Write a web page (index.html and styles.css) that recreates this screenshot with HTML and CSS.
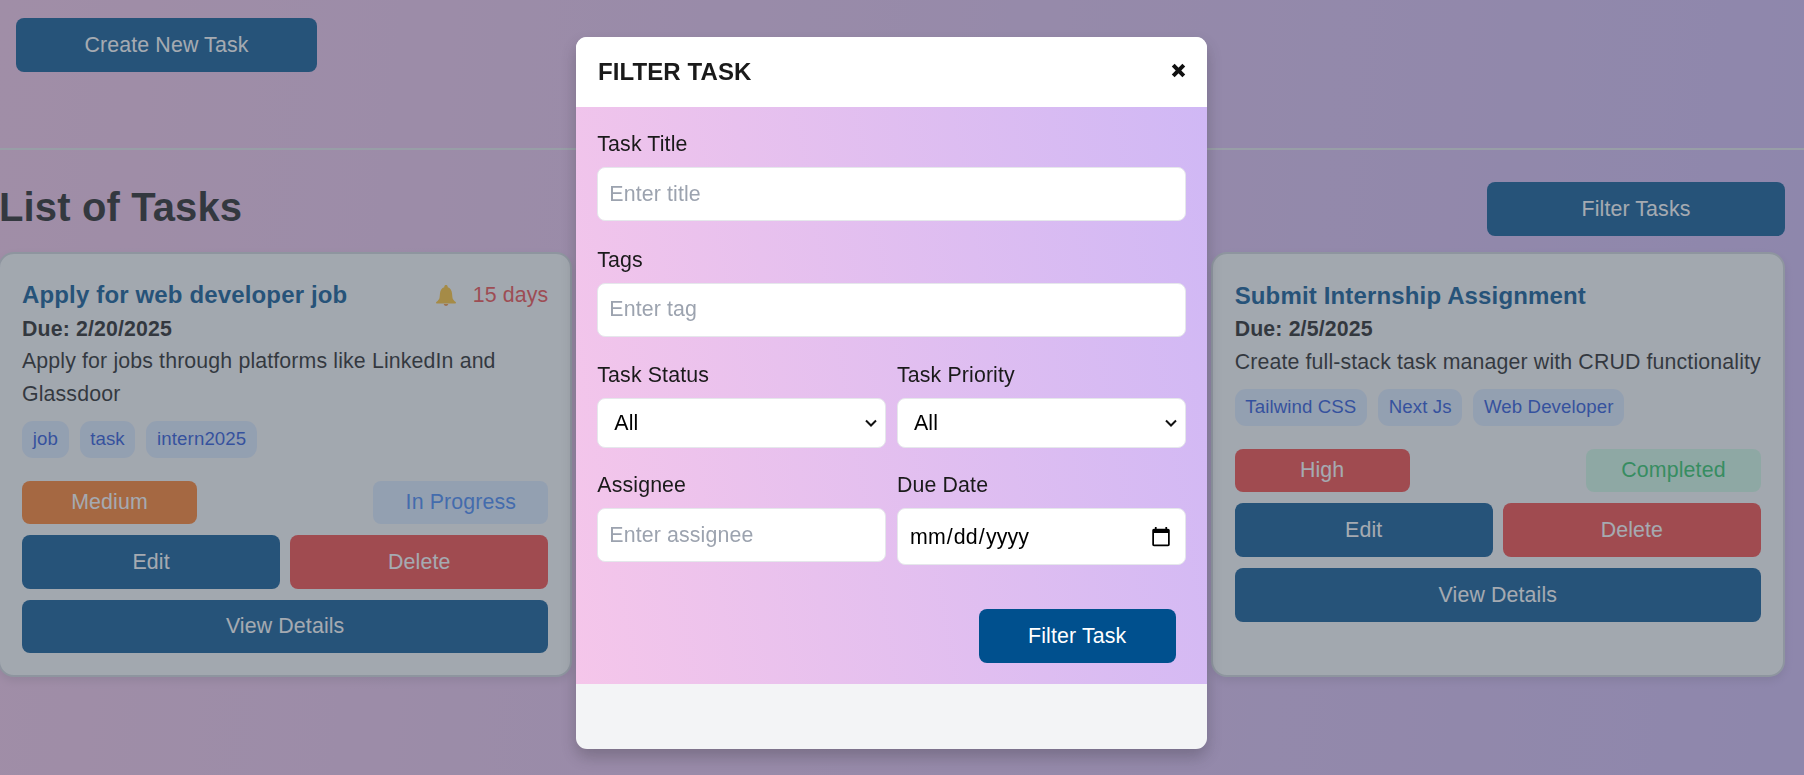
FILE: index.html
```html
<!DOCTYPE html>
<html lang="en">
<head>
    <meta charset="UTF-8">
    <meta name="viewport" content="width=device-width, initial-scale=1.0">
    <title>Task Manager</title>
    <link rel="stylesheet" href="styles.css">
</head>
<body>
    <div class="top-bar">
        <button type="button" class="btn btn-create">Create New Task</button>
    </div>
    <hr class="divider">

    <main class="tasks">
        <div class="tasks-head">
            <h2>List of Tasks</h2>
            <button type="button" class="btn btn-filter">Filter Tasks</button>
        </div>

        <div class="task-grid">
            <article class="card">
                <div class="card-title-row">
                    <h3>Apply for web developer job</h3>
                    <span class="reminder">
                        <svg class="bell" viewBox="0 0 20 21" aria-hidden="true">
                            <path fill="#ffc02a" d="M10 0c1 0 1.700.7 1.700 1.700v.6c2.700.8 4 3 4.300 6l.4 4c.2 2 1.400 3.300 3.300 4.700.5.4.3 1.500-.5 1.500H.8c-.8 0-1-1.100-.5-1.500 1.900-1.400 3.100-2.700 3.300-4.700l.4-4c.3-3 1.600-5.200 4.300-6v-.6C8.300.7 9 0 10 0z"/>
                            <path fill="#f0903a" d="M7.700 19h4.600c-.3 1.200-1.200 2-2.300 2s-2-.8-2.300-2z"/>
                        </svg>
                        <span class="days-left">15 days</span>
                    </span>
                </div>
                <p class="due">Due: 2/20/2025</p>
                <p class="desc">Apply for jobs through platforms like LinkedIn and Glassdoor</p>
                <div class="tags">
                    <span class="tag">job</span>
                    <span class="tag">task</span>
                    <span class="tag">intern2025</span>
                </div>
                <div class="badges">
                    <span class="badge badge-medium">Medium</span>
                    <span class="badge badge-progress">In Progress</span>
                </div>
                <div class="card-actions">
                    <button type="button" class="btn">Edit</button>
                    <button type="button" class="btn btn-delete">Delete</button>
                </div>
                <button type="button" class="btn btn-wide">View Details</button>
            </article>

            <!-- middle card sits behind the modal -->
            <article class="card"></article>

            <article class="card">
                <div class="card-title-row">
                    <h3>Submit Internship Assignment</h3>
                </div>
                <p class="due">Due: 2/5/2025</p>
                <p class="desc">Create full-stack task manager with CRUD functionality</p>
                <div class="tags">
                    <span class="tag">Tailwind CSS</span>
                    <span class="tag">Next Js</span>
                    <span class="tag">Web Developer</span>
                </div>
                <div class="badges">
                    <span class="badge badge-high">High</span>
                    <span class="badge badge-done">Completed</span>
                </div>
                <div class="card-actions">
                    <button type="button" class="btn">Edit</button>
                    <button type="button" class="btn btn-delete">Delete</button>
                </div>
                <button type="button" class="btn btn-wide">View Details</button>
            </article>
        </div>
    </main>

    <div class="overlay">
        <div class="modal">
            <div class="modal-head">
                <h2>FILTER TASK</h2>
                <button type="button" class="close" aria-label="Close">
                    <svg viewBox="0 0 15 15" aria-hidden="true">
                        <path d="M2.200 2.200l10.600 10.600M12.800 2.200L2.200 12.800" stroke="#111" stroke-width="4" fill="none"/>
                    </svg>
                </button>
            </div>
            <form class="modal-body">
                <div class="field">
                    <label for="title">Task Title</label>
                    <input type="text" id="title" placeholder="Enter title">
                </div>
                <div class="field">
                    <label for="tag">Tags</label>
                    <input type="text" id="tag" placeholder="Enter tag">
                </div>
                <div class="field-row">
                    <div class="field">
                        <label for="status">Task Status</label>
                        <select id="status"><option>All</option></select>
                    </div>
                    <div class="field">
                        <label for="priority">Task Priority</label>
                        <select id="priority"><option>All</option></select>
                    </div>
                </div>
                <div class="field-row field-row-last">
                    <div class="field">
                        <label for="assignee">Assignee</label>
                        <input type="text" id="assignee" placeholder="Enter assignee">
                    </div>
                    <div class="field">
                        <label for="due">Due Date</label>
                        <input type="date" id="due">
                    </div>
                </div>
                <div class="modal-actions">
                    <button type="button" class="btn btn-submit">Filter Task</button>
                </div>
            </form>
            <div class="modal-foot"></div>
        </div>
    </div>
</body>
</html>
```

FILE: styles.css
```css
* {
    box-sizing: border-box;
}

body {
    margin: 0;
    height: 775px;
    overflow: hidden;
    font-family: 'Liberation Sans', Arial, sans-serif;
    font-size: 21.33px;
    line-height: 32px;
    letter-spacing: 0.13px;
    color: #1a1a1a;
    background: linear-gradient(95deg, #f5c6ea, #d0b8f5);
}

h2, h3, p {
    margin: 0;
}

.btn {
    display: block;
    height: 54px;
    padding: 0;
    border: none;
    border-radius: 8px;
    font: inherit;
    letter-spacing: inherit;
    color: #fff;
    background-color: #00508e;
    cursor: pointer;
}

.top-bar {
    height: 148px;
    padding: 18px 16px 0;
}

.btn-create {
    width: 301px;
}

.divider {
    height: 2px;
    margin: 0;
    border: none;
    background-color: #e5e7eb;
}

.tasks {
    width: 1787px;
    margin-left: -2px;
}

.tasks-head {
    display: flex;
    justify-content: space-between;
    align-items: flex-end;
    height: 102px;
    padding: 0 0 16px 1px;
}

.tasks-head h2 {
    font-size: 40px;
    line-height: 48px;
    margin-bottom: 5px;
}

.btn-filter {
    width: 298px;
}

.task-grid {
    display: grid;
    grid-template-columns: repeat(3, 1fr);
    column-gap: 32px;
}

.card {
    display: flex;
    flex-direction: column;
    height: 425px;
    padding: 24px 22px 22px;
    border: 2px solid #d1d5db;
    border-radius: 16px;
    background-color: #f9fafb;
    box-shadow: 0 4px 8px rgba(0,0,0,0.1);
}

.card-title-row {
    display: flex;
    justify-content: space-between;
    align-items: center;
    height: 35px;
}

.card-title-row h3 {
    font-size: 24px;
    line-height: 32px;
    letter-spacing: 0.15px;
    color: #00508e;
}

.reminder {
    display: flex;
    align-items: center;
    gap: 17px;
}

.bell {
    width: 20px;
    height: 21px;
}

.days-left {
    color: #ef4444;
}

.due {
    font-weight: bold;
    height: 33px;
}

.desc {
    line-height: 32.67px;
}

.tags {
    display: flex;
    gap: 11px;
    margin-top: 10.4px;
}

.tag {
    height: 37px;
    padding: 0 10.67px;
    border-radius: 11px;
    font-size: 18.67px;
    line-height: 36px;
    letter-spacing: 0.1px;
    color: #1d4ed8;
    background-color: #dbeafe;
}

.badges {
    display: flex;
    justify-content: space-between;
    margin-top: 22.6px;
}

.badge {
    width: 175px;
    height: 43px;
    border-radius: 8px;
    line-height: 42px;
    text-align: center;
}

.badge-medium {
    color: #fff;
    background-color: #ff7a20;
}

.badge-high {
    color: #fff;
    background-color: #f5413d;
}

.badge-progress {
    color: #3b82f6;
    background-color: #dbeafe;
}

.badge-done {
    color: #22c55e;
    background-color: #d1fae5;
}

.card-actions {
    display: grid;
    grid-template-columns: 1fr 1fr;
    gap: 10px;
    margin-top: 11px;
}

.btn-delete {
    background-color: #f5413d;
}

.btn-wide {
    width: 100%;
    margin-top: 11px;
}

/* modal */
.overlay {
    position: fixed;
    top: 0;
    left: 0;
    right: 0;
    bottom: 0;
    display: flex;
    justify-content: center;
    align-items: flex-start;
    padding: 37px 21px 0 0;
    background-color: rgba(75, 85, 99, 0.5);
}

.modal {
    width: 631px;
    height: 712px;
    border-radius: 11px;
    overflow: hidden;
    background-color: #f3f4f6;
    box-shadow: 0 8px 16px rgba(0,0,0,0.2);
}

.modal-head {
    display: flex;
    justify-content: space-between;
    align-items: center;
    height: 70px;
    padding: 0 21px 0 22px;
    background-color: #fff;
}

.modal-head h2 {
    font-size: 24px;
    line-height: 32px;
    letter-spacing: 0.1px;
}

.close {
    display: block;
    width: 15px;
    height: 15px;
    padding: 0;
    margin-top: -3px;
    border: none;
    background: none;
    cursor: pointer;
}

.close svg {
    display: block;
}

.modal-body {
    height: 577px;
    padding: 21px 21.33px 0;
    background: linear-gradient(80deg, #f5c6ea, #d0b8f5);
}

.field {
    margin-bottom: 22.5px;
}

.field label {
    display: block;
    margin-bottom: 7px;
}

.field input,
.field select {
    display: block;
    width: 100%;
    border: 1px solid #e5e7eb;
    border-radius: 8px;
    font: inherit;
    letter-spacing: inherit;
    background-color: #fff;
    color: #000;
}

.field input {
    height: 54px;
    padding: 0 11px;
}

.field input::placeholder {
    color: #9ca3af;
}

.field select {
    height: 50px;
    padding: 0 16px;
    appearance: none;
    background-image: url("data:image/svg+xml,%3Csvg xmlns='http://www.w3.org/2000/svg' width='12' height='8' viewBox='0 0 12 8'%3E%3Cpath d='M1 1.500l5 5 5-5' fill='none' stroke='%23111' stroke-width='2'/%3E%3C/svg%3E");
    background-repeat: no-repeat;
    background-position: right 8px center;
}

.field input[type="date"] {
    height: 57px;
}

.field input[type="date"]::-webkit-calendar-picker-indicator {
    width: 22px;
    height: 22px;
    padding: 0;
    margin-right: 2px;
}

.field-row {
    display: grid;
    grid-template-columns: 1fr 1fr;
    column-gap: 11px;
}

.field-row .field {
    margin-bottom: 21px;
}

.field-row-last .field {
    margin-bottom: 0;
}

.modal-actions {
    display: flex;
    justify-content: flex-end;
    padding: 44px 10px 0 0;
}

.btn-submit {
    width: 197px;
}
```
